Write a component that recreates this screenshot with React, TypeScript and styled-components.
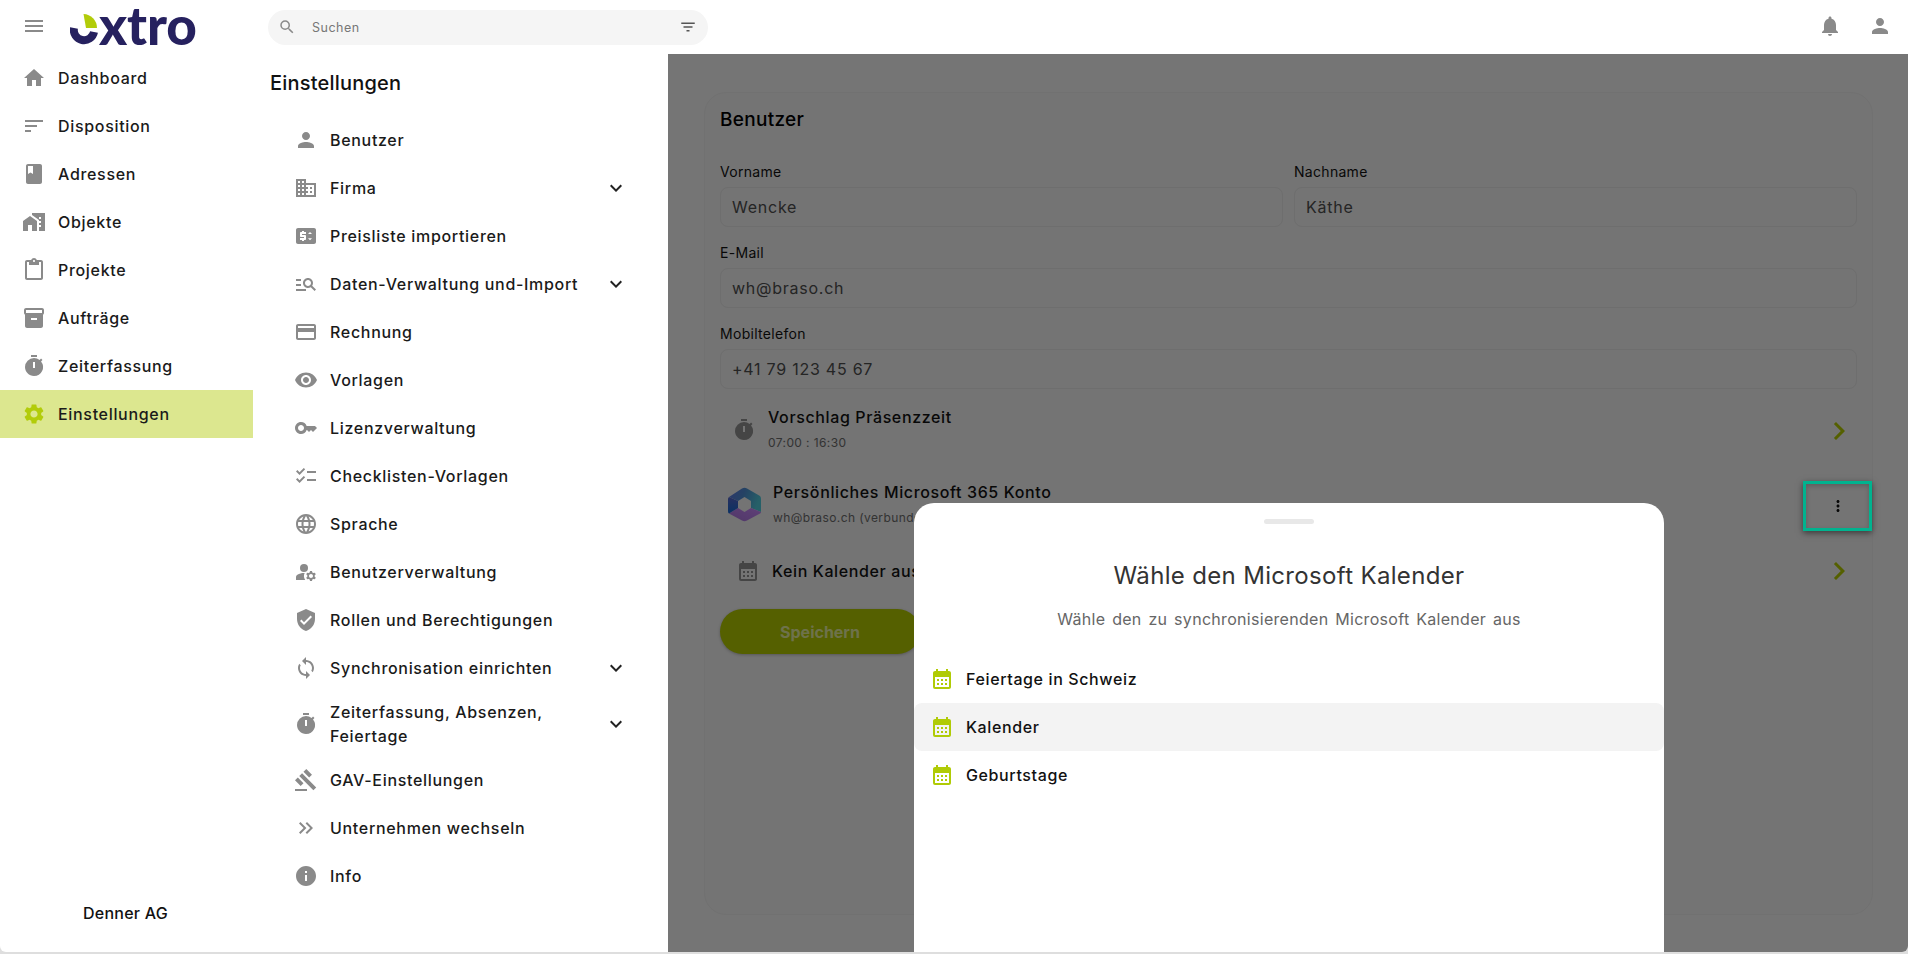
import React from "react";
import styled, { createGlobalStyle } from "styled-components";
import {
  MdHome, MdSort, MdBook, MdHomeWork, MdContentPaste, MdInventory2, MdTimer, MdSettings,
  MdPerson, MdDomain, MdPriceChange, MdManageSearch, MdCreditCard, MdVisibility, MdKey,
  MdChecklist, MdLanguage, MdManageAccounts, MdVerifiedUser, MdSync, MdGavel,
  MdKeyboardDoubleArrowRight, MdInfo, MdExpandMore, MdMenu, MdSearch, MdFilterList,
  MdNotifications, MdChevronRight, MdMoreVert, MdCalendarMonth,
} from "react-icons/md";

const Global = createGlobalStyle`
  html, body { margin: 0; padding: 0; background: #dedede; overflow: hidden; }
  body { font-family: Inter, "Liberation Sans", sans-serif; color: #111; }
  * { box-sizing: border-box; }
`;

const Frame = styled.div`
  width: 1908px; height: 952px; background: #fff; display: flex; flex-direction: column;
  border-radius: 0 0 6px 6px; overflow: hidden;
`;
const Header = styled.header`
  height: 54px; flex: none; display: flex; align-items: center; padding: 0 16px 2px 22px; position: relative;
`;
const IconBtn = styled.span<{ $size?: number; $color?: string }>`
  display: inline-flex; align-items: center; justify-content: center; flex: none;
  color: ${(p) => p.$color ?? "#8a8a8a"}; font-size: ${(p) => p.$size ?? 24}px;
`;
const LogoWrap = styled.div`
  display: flex; align-items: flex-start; margin-left: 24px; width: 127px; height: 52px;
`;
const LogoMark = styled.svg`
  width: 30px; height: 52px; flex: none;
`;
const LogoText = styled.span`
  display: block; font-family: Lato, sans-serif; font-weight: 900; font-size: 53px; line-height: 50px; height: 50px; color: #26215f;
  letter-spacing: -0.1px; margin-left: -1px;
`;
const Search = styled.div`
  width: 440px; height: 35px; margin: 2px 0 0 71px; border-radius: 18px; background: #f5f5f5;
  display: flex; align-items: center; padding: 0 11px 0 10px;
`;
const SearchText = styled.span`
  flex: 1; margin-left: 16px; font-size: 12.5px; letter-spacing: 0.5px; color: #777;
`;
const HeaderRight = styled.div`
  margin-left: auto; display: flex; gap: 26px; align-items: center;
`;
const Body = styled.div`
  flex: 1; display: flex; min-height: 0;
`;
const Sidebar = styled.nav`
  width: 253px; flex: none; display: flex; flex-direction: column;
`;
const NavRow = styled.div<{ $active?: boolean }>`
  height: 48px; display: flex; align-items: center; gap: 12px; padding-left: 22px;
  font-size: 16px; font-weight: 500; letter-spacing: 0.68px; color: #1a1a1a;
  background: ${(p) => (p.$active ? "#dce78f" : "transparent")};
`;
const Company = styled.div`
  margin-top: auto; padding: 0 0 27px 83px; font-size: 16px; font-weight: 500; line-height: 24px; letter-spacing: 0.25px;
`;
const SettingsPanel = styled.aside`
  width: 415px; flex: none; padding: 17px 0 0 17px; display: flex; flex-direction: column;
`;
const PanelTitle = styled.h2`
  margin: 0 0 21px; font-size: 20px; line-height: 24px; font-weight: 500; letter-spacing: 0.2px; color: #111;
`;
const SetRow = styled.div`
  min-height: 48px; display: flex; align-items: center; padding: 8px 0 8px 24px;
  font-size: 16px; font-weight: 500; letter-spacing: 0.68px; line-height: 24px; color: #1a1a1a; width: 358px;
`;
const SetLabel = styled.span`
  flex: 1; margin-left: 12px; max-width: 262px; margin-right: auto;
`;
const Main = styled.main`
  flex: 1; position: relative; background: #ebebeb; padding: 38px 35px 37px 36px; min-width: 0;
`;
const Card = styled.section`
  height: 100%; background: #e8e8e8; border: 1px solid #e2e2e2; border-radius: 22px; padding: 15px 15px;
`;
const CardTitle = styled.h3`
  margin: 0 0 30px; font-size: 19px; line-height: 24px; font-weight: 500; letter-spacing: 0.3px; color: #000;
`;
const Fields = styled.div`
  display: grid; grid-template-columns: 1fr 1fr; gap: 16px 11px;
`;
const Field = styled.div<{ $wide?: boolean }>`
  grid-column: ${(p) => (p.$wide ? "1 / -1" : "auto")};
`;
const Label = styled.div`
  font-size: 14px; line-height: 20px; letter-spacing: 0.3px; color: #111; margin-bottom: 5px;
`;
const Input = styled.div`
  height: 40px; border: 1px solid #dcdcdc; border-radius: 8px; padding: 0 11px; display: flex; align-items: center;
  font-size: 16px; letter-spacing: 0.75px; color: #4a4a4a;
`;
const ListRow = styled.div<{ $h: number; $pl: number; $top?: number }>`
  height: ${(p) => p.$h}px; margin-top: ${(p) => p.$top ?? 0}px; padding-left: ${(p) => p.$pl}px;
  display: flex; align-items: center; gap: 12px;
`;
const ListText = styled.div`
  flex: 1; display: flex; flex-direction: column; gap: 5px; margin-top: -3px;
`;
const ListTitle = styled.div`
  font-size: 16px; line-height: 24px; font-weight: 500; letter-spacing: 0.62px; color: #111;
`;
const SingleTitle = styled(ListTitle)`
  flex: 1;
`;
const ListSub = styled.div`
  font-size: 12px; line-height: 18px; letter-spacing: 0.4px; color: #666;
`;
const DotsButton = styled(IconBtn)`
  margin: 2px 10px 0 0;
`;
const RowChevron = styled(IconBtn)<{ $top?: number }>`
  margin-top: ${(p) => p.$top ?? 0}px;
`;
const Save = styled.div`
  width: 200px; height: 45px; margin-top: 10px; border-radius: 23px; background: #aac000;
  display: flex; align-items: center; justify-content: center; font-size: 16px; font-weight: 700; color: rgba(255,255,255,.6);
  box-shadow: 0 1px 3px rgba(0,0,0,.25);
`;
const Scrim = styled.div`
  position: absolute; inset: 0; background: rgba(0,0,0,.5);
`;
const Focus = styled.div`
  position: absolute; left: 1135px; top: 427px; width: 69px; height: 50px; border: 3px solid #00b38f;
  box-shadow: 0 2px 6px rgba(0,0,0,.5), inset 0 2px 5px rgba(0,0,0,.2);
`;
const Sheet = styled.div`
  position: absolute; left: 246px; top: 449px; width: 750px; bottom: 0; background: #fff; border-radius: 20px 20px 0 0;
  display: flex; flex-direction: column; align-items: stretch;
`;
const Handle = styled.div`
  width: 50px; height: 5px; border-radius: 3px; background: #e8e8e8; margin: 16px auto 0;
`;
const SheetTitle = styled.h2`
  margin: 37px 0 0; text-align: center; font-size: 24px; line-height: 30px; font-weight: 400; letter-spacing: 0.33px; color: #333;
`;
const SheetSub = styled.p`
  margin: 16px 0 0; text-align: center; font-size: 16px; line-height: 24px; letter-spacing: 0.3px; word-spacing: 2px; color: #666;
`;
const SheetList = styled.div`
  margin-top: 24px; display: flex; flex-direction: column;
`;
const SheetRow = styled.div<{ $hover?: boolean }>`
  height: 48px; display: flex; align-items: center; gap: 12px; padding-left: 16px; border-radius: 8px;
  font-size: 16px; font-weight: 500; letter-spacing: 0.62px; color: #111;
  background: ${(p) => (p.$hover ? "#f3f3f3" : "transparent")};
`;

const nav = [
  [MdHome, "Dashboard"], [MdSort, "Disposition"], [MdBook, "Adressen"], [MdHomeWork, "Objekte"],
  [MdContentPaste, "Projekte"], [MdInventory2, "Aufträge"], [MdTimer, "Zeiterfassung"], [MdSettings, "Einstellungen"],
] as const;

const settings: [React.ComponentType, string, boolean?][] = [
  [MdPerson, "Benutzer"], [MdDomain, "Firma", true], [MdPriceChange, "Preisliste importieren"],
  [MdManageSearch, "Daten-Verwaltung und-Import", true], [MdCreditCard, "Rechnung"], [MdVisibility, "Vorlagen"],
  [MdKey, "Lizenzverwaltung"], [MdChecklist, "Checklisten-Vorlagen"], [MdLanguage, "Sprache"],
  [MdManageAccounts, "Benutzerverwaltung"], [MdVerifiedUser, "Rollen und Berechtigungen"],
  [MdSync, "Synchronisation einrichten", true], [MdTimer, "Zeiterfassung, Absenzen, Feiertage", true],
  [MdGavel, "GAV-Einstellungen"], [MdKeyboardDoubleArrowRight, "Unternehmen wechseln"], [MdInfo, "Info"],
];

const Logo365 = () => (
  <svg width="33" height="35" viewBox="0 0 33 35" style={{ flex: "none" }}>
    <defs>
      <linearGradient id="m365a" x1="0" y1="0" x2="1" y2="0.3">
        <stop offset="0" stopColor="#5a70d8" />
        <stop offset="0.5" stopColor="#4a86c8" />
        <stop offset="1" stopColor="#4cc0d0" />
      </linearGradient>
      <linearGradient id="m365b" x1="0" y1="1" x2="1" y2="0">
        <stop offset="0" stopColor="#a070d0" />
        <stop offset="1" stopColor="#c080f0" />
      </linearGradient>
      <linearGradient id="m365c" x1="0" y1="0" x2="0" y2="1">
        <stop offset="0" stopColor="#5060c0" />
        <stop offset="1" stopColor="#1464c8" />
      </linearGradient>
    </defs>
    <path fill="url(#m365a)" d="M1 10 L14 1.5 Q16.5 0 19 1.5 L32 9 Q33 10 33 12 V25 L23 21 V14 L16.5 10 L10 14 Z" />
    <path fill="url(#m365b)" d="M33 25 Q33 26 32 26.5 L19 33.6 Q16.5 35 14 33.6 L1 26.5 L10 21 L16.5 25 L23 21 Z" />
    <path fill="url(#m365c)" d="M1 10 L10 14 V21 L1 26.5 Q0 26 0 24 V12 Q0 11 1 10 Z" />
  </svg>
);

export default function App() {
  return (
    <>
      <Global />
      <Frame>
        <Header>
          <IconBtn $size={24}><MdMenu /></IconBtn>
          <LogoWrap>
            <LogoMark viewBox="0 0 30 52">
              <path d="M4 28 A10 10 0 0 0 24 32" fill="none" stroke="#26215f" strokeWidth="8" />
              <path d="M13.5 14 A14 14 0 0 1 27 28 H16 Z" fill="#b2cc0a" />
            </LogoMark>
            <LogoText>xtro</LogoText>
          </LogoWrap>
          <Search>
            <IconBtn $size={18}><MdSearch /></IconBtn>
            <SearchText>Suchen</SearchText>
            <IconBtn $size={18} $color="#555"><MdFilterList /></IconBtn>
          </Search>
          <HeaderRight>
            <IconBtn $size={24}><MdNotifications /></IconBtn>
            <IconBtn $size={24}><MdPerson /></IconBtn>
          </HeaderRight>
        </Header>
        <Body>
          <Sidebar>
            {nav.map(([I, t], i) => (
              <NavRow key={t} $active={i === 7}>
                <IconBtn $color={i === 7 ? "#b2cc0a" : "#8a8a8a"}><I /></IconBtn>
                {t}
              </NavRow>
            ))}
            <Company>Denner AG</Company>
          </Sidebar>
          <SettingsPanel>
            <PanelTitle>Einstellungen</PanelTitle>
            {settings.map(([I, t, more]) => (
              <SetRow key={t}>
                <IconBtn><I /></IconBtn>
                <SetLabel>{t}</SetLabel>
                {more && <IconBtn $color="#222"><MdExpandMore /></IconBtn>}
              </SetRow>
            ))}
          </SettingsPanel>
          <Main>
            <Card>
              <CardTitle>Benutzer</CardTitle>
              <Fields>
                <Field><Label>Vorname</Label><Input>Wencke</Input></Field>
                <Field><Label>Nachname</Label><Input>Käthe</Input></Field>
                <Field $wide><Label>E-Mail</Label><Input>wh@braso.ch</Input></Field>
                <Field $wide><Label>Mobiltelefon</Label><Input>+41 79 123 45 67</Input></Field>
              </Fields>
              <ListRow $h={75} $pl={12} $top={3}>
                <IconBtn><MdTimer /></IconBtn>
                <ListText>
                  <ListTitle>Vorschlag Präsenzzeit</ListTitle>
                  <ListSub>07:00 : 16:30</ListSub>
                </ListText>
                <RowChevron $size={36} $color="#aac000" $top={2}><MdChevronRight /></RowChevron>
              </ListRow>
              <ListRow $h={75} $pl={8}>
                <Logo365 />
                <ListText>
                  <ListTitle>Persönliches Microsoft 365 Konto</ListTitle>
                  <ListSub>wh@braso.ch (verbunden)</ListSub>
                </ListText>
                <DotsButton $size={18} $color="#111"><MdMoreVert /></DotsButton>
              </ListRow>
              <ListRow $h={57} $pl={16}>
                <IconBtn><MdCalendarMonth /></IconBtn>
                <SingleTitle>Kein Kalender ausgewählt</SingleTitle>
                <RowChevron $size={36} $color="#aac000"><MdChevronRight /></RowChevron>
              </ListRow>
              <Save>Speichern</Save>
            </Card>
            <Scrim />
            <Focus />
            <Sheet>
              <Handle />
              <SheetTitle>Wähle den Microsoft Kalender</SheetTitle>
              <SheetSub>Wähle den zu synchronisierenden Microsoft Kalender aus</SheetSub>
              <SheetList>
                {["Feiertage in Schweiz", "Kalender", "Geburtstage"].map((t, i) => (
                  <SheetRow key={t} $hover={i === 1}>
                    <IconBtn $color="#b0cb06"><MdCalendarMonth /></IconBtn>
                    {t}
                  </SheetRow>
                ))}
              </SheetList>
            </Sheet>
          </Main>
        </Body>
      </Frame>
    </>
  );
}
